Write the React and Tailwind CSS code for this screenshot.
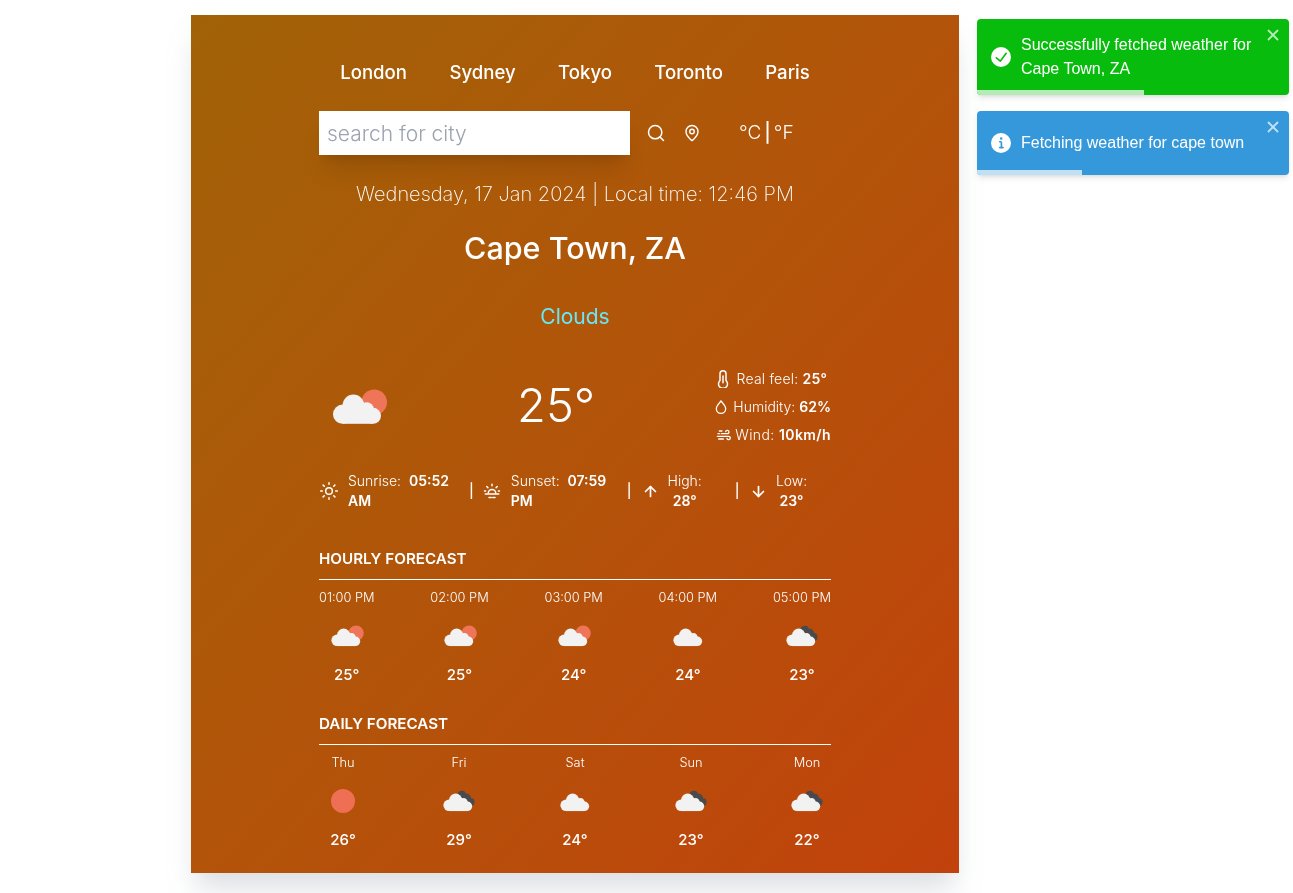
import { Search, MapPin, Sun, ArrowUp, ArrowDown, X } from "lucide-react";

const cities = ["London", "Sydney", "Tokyo", "Toronto", "Paris"];

const hourly = [
  { title: "01:00 PM", kind: "sun", temp: "25°" },
  { title: "02:00 PM", kind: "sun", temp: "25°" },
  { title: "03:00 PM", kind: "sun", temp: "24°" },
  { title: "04:00 PM", kind: "cloud", temp: "24°" },
  { title: "05:00 PM", kind: "dark", temp: "23°" },
];

const daily = [
  { title: "Thu", kind: "clear", temp: "26°" },
  { title: "Fri", kind: "dark", temp: "29°" },
  { title: "Sat", kind: "cloud", temp: "24°" },
  { title: "Sun", kind: "dark", temp: "23°" },
  { title: "Mon", kind: "dark", temp: "22°" },
];

function WeatherIcon({ kind, className }) {
  return (
    <svg viewBox="0 0 100 100" className={className}>
      {kind === "clear" && <circle cx="50" cy="50" r="25" fill="#ee6f53" />}
      {kind === "sun" && <circle cx="69" cy="44" r="16" fill="#ee7558" />}
      {kind === "dark" && (
        <g fill="#484a4d">
          <circle cx="56" cy="37" r="8.500" />
          <circle cx="66" cy="44" r="9" />
          <circle cx="74" cy="52" r="8.500" />
        </g>
      )}
      {kind !== "clear" && (
        <g fill="#f2f2f2" transform={kind === "cloud" ? "translate(2 0)" : undefined}>
          <circle cx="29.500" cy="59" r="12" />
          <circle cx="43" cy="48" r="13.500" />
          <circle cx="59.500" cy="53" r="9" />
          <circle cx="67.500" cy="61" r="10" />
          <rect x="29.500" y="52" width="38" height="19" />
        </g>
      )}
    </svg>
  );
}

function WindIcon({ className }) {
  return (
    <svg viewBox="0 0 24 24" fill="none" stroke="currentColor" strokeWidth="2" strokeLinecap="round" className={className}>
      <path d="M8 10h9a2.500 2.500 0 1 0-2.500-3" />
      <path d="M2 14h17a2.500 2.500 0 1 1-2.500 3" />
      <path d="M3 10h2M5 6h4M4 18h7" />
    </svg>
  );
}

function ThermoIcon({ className }) {
  return (
    <svg viewBox="0 0 24 24" fill="none" stroke="currentColor" strokeWidth="2" strokeLinecap="round" className={className}>
      <path d="M8 5a4 4 0 0 1 8 0v9a6 6 0 1 1-8 0z" />
      <path d="M12 8v9" />
    </svg>
  );
}

function DropIcon({ className }) {
  return (
    <svg viewBox="0 0 24 24" fill="none" stroke="currentColor" strokeWidth="2" className={className}>
      <path d="M12 3c3 4 7 7.500 7 11.500a7 7 0 0 1-14 0C5 10.500 9 7 12 3z" />
    </svg>
  );
}

function SunsetIcon({ className }) {
  return (
    <svg viewBox="0 0 24 24" fill="none" stroke="currentColor" strokeWidth="2" strokeLinecap="round" className={className}>
      <path d="M7 15a5 5 0 0 1 10 0" />
      <path d="M3 16h18M8 20.500h3M13 20.500h3" />
      <path d="M12 3v2M5 6l1.500 1.500M19 6l-1.500 1.500M2 12h1.500M22 12h-1.500" />
    </svg>
  );
}

function Forecast({ title, items, mt }) {
  return (
    <div className={mt}>
      <p className="h-[22px] text-[15.2px] leading-[22px] font-semibold">{title}</p>
      <hr className="mt-[9px] border-white" />
      <div className="mt-2 flex justify-between">
        {items.map((item, i) => (
          <div key={i} className="flex flex-col items-center">
            <p className="text-[12.8px] leading-5 font-light">{item.title}</p>
            <WeatherIcon kind={item.kind} className="mt-1 h-12 w-12" />
            <p className="mt-[3px] text-[15px] leading-6 font-medium">{item.temp}</p>
          </div>
        ))}
      </div>
    </div>
  );
}

function Toast({ color, barColor, barWidth, icon, children, height }) {
  return (
    <div className={`relative flex w-[312px] items-center overflow-hidden rounded-[4px] px-[14px] pb-[1px] font-['Liberation_Sans',sans-serif] text-base leading-6 text-white shadow-md ${color} ${height}`}>
      {icon}
      <p className="ml-[10px] w-[240px]">{children}</p>
      <X className="absolute top-[7px] right-[7px] h-[18px] w-[18px] opacity-70" strokeWidth={2.4} />
      <div className={`absolute bottom-0 left-0 h-[5px] ${barColor} ${barWidth}`} />
    </div>
  );
}

export default function App() {
  return (
    <div className="relative min-h-[893px] bg-white pt-[15px] font-['Inter',sans-serif]">
      <div className="ml-[191px] h-[858px] w-[768px] bg-gradient-to-br from-[#a16207] to-[#c2410c] px-32 text-white shadow-[0_20px_25px_-5px_rgba(156,163,175,0.35)] will-change-transform">
        <div className="flex h-[96px] items-center justify-around pt-5">
          {cities.map((c) => (
            <button key={c} className="text-[18.6px] font-medium">{c}</button>
          ))}
        </div>

        <div className="flex h-[44px] items-center">
          <input
            type="text"
            placeholder="search for city"
            className="h-[44px] w-[311px] bg-white p-2 text-[21px] font-light text-gray-500 shadow-xl outline-none placeholder:text-[#9ca3af]"
          />
          <Search className="ml-4 h-5 w-5" strokeWidth={1.8} />
          <MapPin className="ml-[17px] h-[18px] w-[18px]" strokeWidth={1.9} />
          <div className="ml-[38px] flex items-center gap-[3px] text-[19px] font-light">
            <span>°C</span>
            <span className="font-medium">|</span>
            <span>°F</span>
          </div>
        </div>

        <p className="mt-[27px] text-center text-[20px] leading-6 font-extralight">
          Wednesday, 17 Jan 2024 | Local time: 12:46 PM
        </p>
        <p className="mt-6 text-center text-[30.5px] leading-9 font-medium">Cape Town, ZA</p>
        <p className="mt-[37px] text-center text-[21px] leading-7 text-[#67e8f9]">Clouds</p>

        <div className="mt-[31px] flex h-[90px] items-center justify-between">
          <WeatherIcon kind="sun" className="h-20 w-20" />
          <p className="mb-1 text-[47px] font-light">25°</p>
          <div className="flex flex-col items-end gap-2 text-sm leading-5 font-light">
            <p className="mr-1 flex items-center tracking-[0.2px]"><ThermoIcon className="mr-[5px] h-[18px] w-[18px]" />Real feel:&nbsp;<b className="font-semibold">25°</b></p>
            <p className="flex items-center"><DropIcon className="mr-1 h-4 w-4" />Humidity:&nbsp;<b className="font-semibold">62%</b></p>
            <p className="flex items-center tracking-[0.4px]"><WindIcon className="mr-[3px] h-4 w-4" />Wind:&nbsp;<b className="font-semibold">10km/h</b></p>
          </div>
        </div>

        <div className="mt-[18px] flex h-[42px] items-center text-sm leading-5 font-light">
          <Sun className="h-5 w-5 shrink-0" strokeWidth={1.8} />
          <p className="ml-[9px] w-[121px]">Sunrise:&nbsp; <b className="font-semibold">05:52 AM</b></p>
          <span className="font-medium">|</span>
          <SunsetIcon className="ml-[9px] h-[18px] w-[18px] shrink-0" />
          <p className="ml-[10px] w-[116px]">Sunset:&nbsp; <b className="font-semibold">07:59 PM</b></p>
          <span className="font-medium">|</span>
          <ArrowUp className="ml-[10px] h-[17px] w-[17px] shrink-0" strokeWidth={2.4} />
          <p className="mr-[25px] ml-[1px] w-[50px] text-center">High:<br /><b className="font-semibold">28°</b></p>
          <span className="font-medium">|</span>
          <ArrowDown className="ml-[10px] h-[17px] w-[17px] shrink-0" strokeWidth={2.4} />
          <p className="ml-[1px] w-12 text-center">Low:<br /><b className="font-semibold">23°</b></p>
        </div>

        <Forecast title="HOURLY FORECAST" items={hourly} mt="mt-9" />
        <Forecast title="DAILY FORECAST" items={daily} mt="mt-[26px]" />
      </div>

      <div className="absolute top-[19px] left-[977px] flex flex-col gap-4">
        <Toast
          color="bg-[#07bc0c]"
          barColor="bg-[#b5ebb6]"
          barWidth="w-[167px]"
          height="h-[76px]"
          icon={
            <svg viewBox="0 0 24 24" className="h-5 w-5 shrink-0" fill="white">
              <path d="M12 0a12 12 0 1012 12A12.014 12.014 0 0012 0zm6.927 8.200l-6.845 9.289a1.011 1.011 0 01-1.430.188l-4.888-3.908a1 1 0 111.250-1.562l4.076 3.261 6.227-8.451a1 1 0 111.610 1.183z" />
            </svg>
          }
        >
          Successfully fetched weather for Cape Town, ZA
        </Toast>
        <Toast
          color="bg-[#3498db]"
          barColor="bg-[#c2e0f4]"
          barWidth="w-[105px]"
          height="h-[64px]"
          icon={
            <svg viewBox="0 0 24 24" className="h-5 w-5 shrink-0" fill="white">
              <path d="M12 0a12 12 0 1012 12A12.013 12.013 0 0012 0zm.250 5a1.500 1.500 0 11-1.500 1.500 1.500 1.500 0 011.500-1.500zm2.250 13.500h-4a1 1 0 010-2h.750a.250.250 0 00.250-.250v-4.500a.250.250 0 00-.250-.250h-.750a1 1 0 010-2h1a2 2 0 012 2v4.750a.250.250 0 00.250.250h.750a1 1 0 110 2z" />
            </svg>
          }
        >
          Fetching weather for cape town
        </Toast>
      </div>
    </div>
  );
}
